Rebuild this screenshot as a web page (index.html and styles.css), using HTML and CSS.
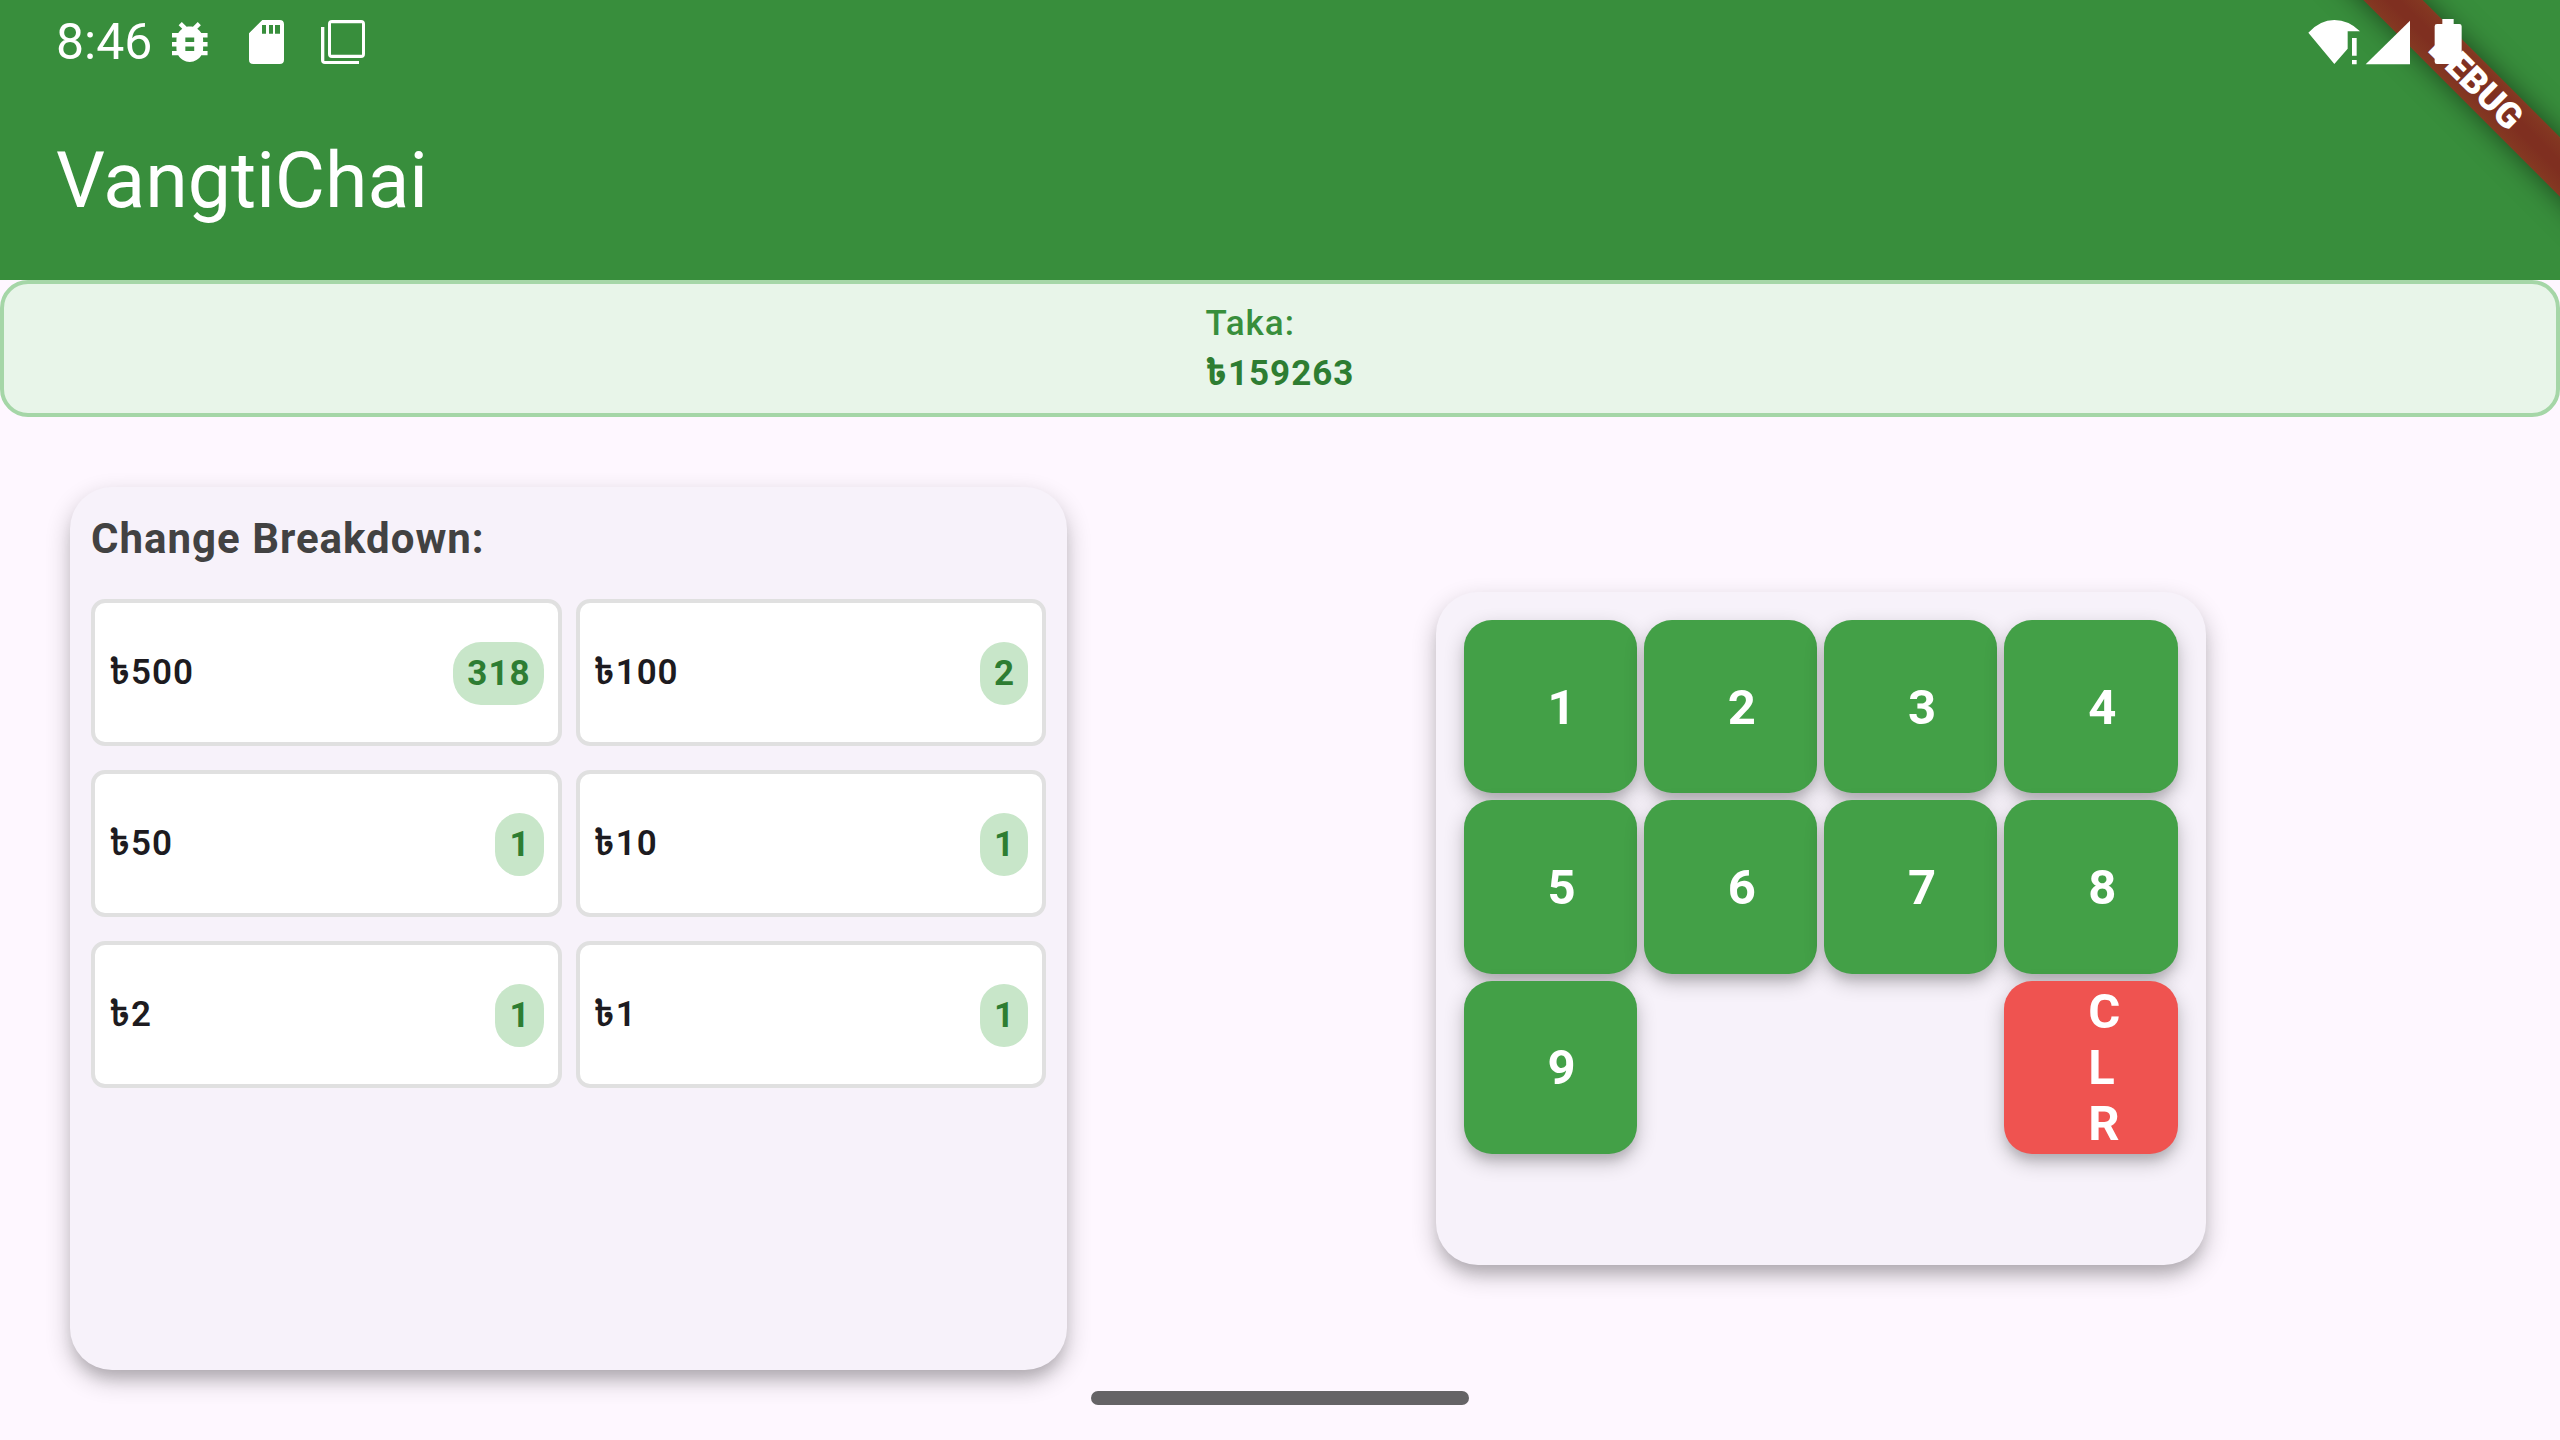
FILE: index.html
```html
<!DOCTYPE html>
<html lang="en">
<head>
<meta charset="utf-8">
<title>VangtiChai</title>
<link rel="stylesheet" href="styles.css">
</head>
<body>
<div class="banner" aria-hidden="true">DEBUG</div>
<header class="header">
  <div class="status-bar">
    <div class="status-group">
      <time class="clock">8:46</time>
      <div class="notifications">
        <svg class="icon-bug" viewBox="4 3 16 18" preserveAspectRatio="xMinYMid meet"><path d="M20 8h-2.81c-.45-.78-1.07-1.45-1.82-1.96L17 4.41 15.59 3l-2.17 2.17C12.96 5.06 12.49 5 12 5c-.49 0-.96.06-1.41.17L8.41 3 7 4.41l1.62 1.63C7.88 6.55 7.26 7.22 6.81 8H4v2h2.09c-.05.33-.09.66-.09 1v1H4v2h2v1c0 .34.04.67.09 1H4v2h2.81c1.04 1.79 2.97 3 5.19 3s4.15-1.21 5.19-3H20v-2h-2.09c.05-.33.09-.66.09-1v-1h2v-2h-2v-1c0-.34-.04-.67-.09-1H20V8zm-6 8h-4v-2h4v2zm0-4h-4v-2h4v2z"/></svg>
        <svg class="icon-card" viewBox="0 0 105 132"><path fill-rule="evenodd" d="M40 0H92Q105 0 105 13V119Q105 132 92 132H13Q0 132 0 119V40ZM39 15V41H51V15ZM60 15V41H72V15ZM78 15V41H93V15Z"/></svg>
        <svg class="icon-copy" viewBox="0 0 132 132"><path fill-rule="evenodd" d="M33 0H120Q132 0 132 12V102Q132 114 120 114H33Q21 114 21 102V12Q21 0 33 0ZM30 10V104H123V10ZM0 21H10V123H114V132H12Q0 132 0 120Z"/></svg>
      </div>
    </div>
    <div class="status-group">
      <svg class="icon-wifi" viewBox="144 54 156 138"><path d="M145 95Q180 57 223 57T300 91H263V143L223 189ZM276 111H290V164H276ZM276 177H290V190H276Z"/></svg>
      <svg class="icon-signal" viewBox="315 54 138 138"><path d="M317 190L450 59V190Z"/></svg>
      <svg class="icon-battery" viewBox="523 54 84 138"><path d="M548 54H582V69H599Q606 69 606 76V182Q606 189 599 189H532Q525 189 525 182V76Q525 69 532 69H548Z"/></svg>
    </div>
  </div>
  <h1 class="title">VangtiChai</h1>
</header>
<section class="amount">
  <div class="amount-text">
    <div class="amount-label">Taka:</div>
    <div class="amount-value">৳159263</div>
  </div>
</section>
<main class="main">
  <section class="card breakdown">
    <h2 class="breakdown-title">Change Breakdown:</h2>
    <ul class="notes">
      <li class="note"><span>৳500</span><span class="badge">318</span></li>
      <li class="note"><span>৳100</span><span class="badge">2</span></li>
      <li class="note"><span>৳50</span><span class="badge">1</span></li>
      <li class="note"><span>৳10</span><span class="badge">1</span></li>
      <li class="note"><span>৳2</span><span class="badge">1</span></li>
      <li class="note"><span>৳1</span><span class="badge">1</span></li>
    </ul>
  </section>
  <div class="keypad-area">
    <section class="card keypad">
      <button class="key" type="button">1</button>
      <button class="key" type="button">2</button>
      <button class="key" type="button">3</button>
      <button class="key" type="button">4</button>
      <button class="key" type="button">5</button>
      <button class="key" type="button">6</button>
      <button class="key" type="button">7</button>
      <button class="key" type="button">8</button>
      <button class="key" type="button">9</button>
      <button class="key key-clear" type="button">CLR</button>
    </section>
  </div>
</main>
<div class="home-bar"></div>
</body>
</html>
```
FILE: styles.css
```css
* { box-sizing: border-box; }

body {
  margin: 0;
  min-height: 100vh;
  display: flex;
  flex-direction: column;
  position: relative;
  overflow-x: hidden;
  background: #fef7ff;
  color: #1d1b20;
  font-family: Roboto, "Noto Sans Bengali", "Noto Sans", sans-serif;
  font-size: 35px;
  line-height: 50px;
}

.header {
  background: #388e3c;
  color: #fff;
}

.status-bar {
  position: relative;
  z-index: 2;
  height: 84px;
  padding: 0 98px 0 56px;
  display: flex;
  align-items: center;
  justify-content: space-between;
}

.status-bar svg { fill: #fff; display: block; }
.status-group { display: flex; align-items: center; }
.clock { font-size: 50px; }
.notifications { display: flex; align-items: center; gap: 37px; margin-left: 20px; }
.icon-bug { width: 40px; height: 40px; }
.icon-card { width: 35px; height: 44px; }
.icon-copy { width: 44px; height: 44px; }
.icon-wifi { width: 52px; height: 46px; }
.icon-signal { width: 46px; height: 46px; margin-left: 5px; }
.icon-battery { width: 28px; height: 46px; margin-left: 23px; }

.title {
  margin: 0;
  padding: 0 56px 2px;
  font-size: 77px;
  font-weight: 400;
  line-height: 194px;
}

.banner {
  position: absolute;
  z-index: 1;
  top: 62px;
  right: -116px;
  width: 400px;
  height: 42px;
  transform: rotate(45deg);
  background: linear-gradient(#843922, #7f2f20 40%, #7f2f20 60%, #843922);
  box-shadow: 0 0 28px rgba(0, 0, 0, 0.5);
  color: #fff;
  font-size: 36px;
  font-weight: 900;
  line-height: 42px;
  text-align: center;
}

.amount {
  display: flex;
  justify-content: center;
  padding: 15px 14px 14px;
  border: 4px solid #a5d6a7;
  border-radius: 28px;
  background: #e8f5e9;
  letter-spacing: 1px;
}

.amount-label { color: #388e3c; font-weight: 500; }
.amount-value { color: #2e7d32; font-weight: 700; }

.main {
  flex: 1;
  display: grid;
  grid-template-columns: 3fr 4fr;
  gap: 56px;
  padding: 56px;
}

.card {
  margin: 14px;
  border-radius: 42px;
  background: #f7f2fa;
  box-shadow: 0 10px 24px rgba(0, 0, 0, 0.24), 0 12px 14px -4px rgba(0, 0, 0, 0.12);
}

.breakdown { padding: 22px 21px 21px; }

.breakdown-title {
  margin: 0 0 30px;
  color: #424242;
  font-size: 42px;
  font-weight: 700;
  line-height: 60px;
  letter-spacing: 1px;
}

.notes {
  margin: 0;
  padding: 0;
  list-style: none;
  display: grid;
  grid-template-columns: 1fr 1fr;
  gap: 24px 14px;
}

.note {
  aspect-ratio: 16 / 5;
  padding: 1px 14px 0;
  display: flex;
  align-items: center;
  justify-content: space-between;
  border: 4px solid #e0e0e0;
  border-radius: 14px;
  background: #fff;
  font-weight: 600;
  letter-spacing: 1px;
}

.badge {
  padding: 7px 13px 6px 14px;
  border-radius: 28px;
  background: #c8e6c9;
  color: #2e7d32;
  font-weight: 700;
}

.keypad-area {
  display: flex;
  align-items: center;
  justify-content: center;
}

.keypad {
  flex: 0 1 770px;
  min-height: 673px;
  padding: 28px;
  display: grid;
  grid-template-columns: repeat(4, 1fr);
  align-content: start;
  gap: 7px;
}

.key {
  aspect-ratio: 1;
  min-width: 0;
  padding: 2px 84px 0;
  border: 0;
  border-radius: 28px;
  background: #43a047;
  box-shadow: 0 8px 20px rgba(0, 0, 0, 0.24), 0 8px 10px -2px rgba(0, 0, 0, 0.1);
  color: #fff;
  font: 700 49px/56px Roboto, sans-serif;
  text-align: left;
  word-break: break-all;
}

.key-clear { grid-column: 4; background: #ef5350; }

.home-bar {
  position: absolute;
  left: 50%;
  bottom: 35px;
  width: 378px;
  height: 14px;
  transform: translateX(-50%);
  border-radius: 7px;
  background: #656366;
}
```
